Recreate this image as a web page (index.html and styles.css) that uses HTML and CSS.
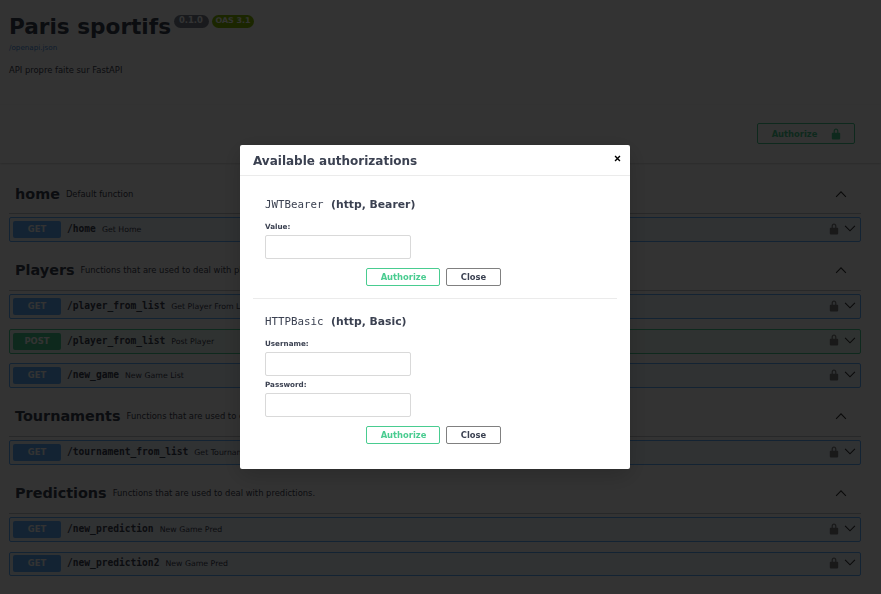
FILE: index.html
```html
<!DOCTYPE html>
<html lang="en">
<head>
<meta charset="utf-8">
<title>Paris sportifs</title>
<link rel="stylesheet" href="styles.css">
</head>
<body>
<header class="info">
  <div class="title-row">
    <h1 class="title">Paris sportifs</h1>
    <span class="badge badge-version">0.1.0</span>
    <span class="badge badge-oas">OAS 3.1</span>
  </div>
  <a class="spec-link" href="#">/openapi.json</a>
  <p class="description">API propre faite sur FastAPI</p>
</header>
<div class="scheme">
  <button class="auth-open">Authorize
    <svg class="lock-green" viewBox="0 0 20 20" width="12" height="12"><path d="M15.8 8H14V5.6C14 2.7 12.3 1 10 1S6 2.7 6 5.6V8H4.2C3.5 8 3 8.6 3 9.2v8.5c0 .7.5 1.3 1.2 1.3h11.6c.7 0 1.2-.6 1.2-1.3V9.2c0-.6-.5-1.2-1.2-1.2zM8 8V5.6C8 4 8.8 3 10 3s2 1 2 2.6V8H8z"/></svg>
  </button>
</div>
<main class="ops">
  <section class="tag-group">
    <div class="tag-head"><h3 class="tag-name">home</h3><span class="tag-desc">Default function</span>
      <svg class="chev-up" viewBox="0 0 20 20" width="14" height="14"><path d="M3 14 10 7l7 7"/></svg></div>
    <div class="op op-get"><span class="method">GET</span><span class="path">/home</span><span class="summary">Get Home</span>
      <svg class="lock-grey" viewBox="0 0 20 20" width="12" height="12"><path d="M15.8 8H14V5.6C14 2.7 12.3 1 10 1S6 2.7 6 5.6V8H4.2C3.5 8 3 8.6 3 9.2v8.5c0 .7.5 1.3 1.2 1.3h11.6c.7 0 1.2-.6 1.2-1.3V9.2c0-.6-.5-1.2-1.2-1.2zM8 8V5.6C8 4 8.8 3 10 3s2 1 2 2.6V8H8z"/></svg>
      <svg class="chev-down" viewBox="0 0 20 20" width="14" height="14"><path d="M3 7l7 7 7-7"/></svg></div>
  </section>
  <section class="tag-group">
    <div class="tag-head"><h3 class="tag-name">Players</h3><span class="tag-desc">Functions that are used to deal with players.</span>
      <svg class="chev-up" viewBox="0 0 20 20" width="14" height="14"><path d="M3 14 10 7l7 7"/></svg></div>
    <div class="op op-get"><span class="method">GET</span><span class="path">/player_from_list</span><span class="summary">Get Player From List</span>
      <svg class="lock-grey" viewBox="0 0 20 20" width="12" height="12"><path d="M15.8 8H14V5.6C14 2.7 12.3 1 10 1S6 2.7 6 5.6V8H4.2C3.5 8 3 8.6 3 9.2v8.5c0 .7.5 1.3 1.2 1.3h11.6c.7 0 1.2-.6 1.2-1.3V9.2c0-.6-.5-1.2-1.2-1.2zM8 8V5.6C8 4 8.8 3 10 3s2 1 2 2.6V8H8z"/></svg>
      <svg class="chev-down" viewBox="0 0 20 20" width="14" height="14"><path d="M3 7l7 7 7-7"/></svg></div>
    <div class="op op-post"><span class="method">POST</span><span class="path">/player_from_list</span><span class="summary">Post Player</span>
      <svg class="lock-grey" viewBox="0 0 20 20" width="12" height="12"><path d="M15.8 8H14V5.6C14 2.7 12.3 1 10 1S6 2.7 6 5.6V8H4.2C3.5 8 3 8.6 3 9.2v8.5c0 .7.5 1.3 1.2 1.3h11.6c.7 0 1.2-.6 1.2-1.3V9.2c0-.6-.5-1.2-1.2-1.2zM8 8V5.6C8 4 8.8 3 10 3s2 1 2 2.6V8H8z"/></svg>
      <svg class="chev-down" viewBox="0 0 20 20" width="14" height="14"><path d="M3 7l7 7 7-7"/></svg></div>
    <div class="op op-get"><span class="method">GET</span><span class="path">/new_game</span><span class="summary">New Game List</span>
      <svg class="lock-grey" viewBox="0 0 20 20" width="12" height="12"><path d="M15.8 8H14V5.6C14 2.7 12.3 1 10 1S6 2.7 6 5.6V8H4.2C3.5 8 3 8.6 3 9.2v8.5c0 .7.5 1.3 1.2 1.3h11.6c.7 0 1.2-.6 1.2-1.3V9.2c0-.6-.5-1.2-1.2-1.2zM8 8V5.6C8 4 8.8 3 10 3s2 1 2 2.6V8H8z"/></svg>
      <svg class="chev-down" viewBox="0 0 20 20" width="14" height="14"><path d="M3 7l7 7 7-7"/></svg></div>
  </section>
  <section class="tag-group">
    <div class="tag-head"><h3 class="tag-name">Tournaments</h3><span class="tag-desc">Functions that are used to deal with tournaments.</span>
      <svg class="chev-up" viewBox="0 0 20 20" width="14" height="14"><path d="M3 14 10 7l7 7"/></svg></div>
    <div class="op op-get"><span class="method">GET</span><span class="path">/tournament_from_list</span><span class="summary">Get Tournament From List</span>
      <svg class="lock-grey" viewBox="0 0 20 20" width="12" height="12"><path d="M15.8 8H14V5.6C14 2.7 12.3 1 10 1S6 2.7 6 5.6V8H4.2C3.5 8 3 8.6 3 9.2v8.5c0 .7.5 1.3 1.2 1.3h11.6c.7 0 1.2-.6 1.2-1.3V9.2c0-.6-.5-1.2-1.2-1.2zM8 8V5.6C8 4 8.8 3 10 3s2 1 2 2.6V8H8z"/></svg>
      <svg class="chev-down" viewBox="0 0 20 20" width="14" height="14"><path d="M3 7l7 7 7-7"/></svg></div>
  </section>
  <section class="tag-group">
    <div class="tag-head"><h3 class="tag-name">Predictions</h3><span class="tag-desc">Functions that are used to deal with predictions.</span>
      <svg class="chev-up" viewBox="0 0 20 20" width="14" height="14"><path d="M3 14 10 7l7 7"/></svg></div>
    <div class="op op-get"><span class="method">GET</span><span class="path">/new_prediction</span><span class="summary">New Game Pred</span>
      <svg class="lock-grey" viewBox="0 0 20 20" width="12" height="12"><path d="M15.8 8H14V5.6C14 2.7 12.3 1 10 1S6 2.7 6 5.6V8H4.2C3.5 8 3 8.6 3 9.2v8.5c0 .7.5 1.3 1.2 1.3h11.6c.7 0 1.2-.6 1.2-1.3V9.2c0-.6-.5-1.2-1.2-1.2zM8 8V5.6C8 4 8.8 3 10 3s2 1 2 2.6V8H8z"/></svg>
      <svg class="chev-down" viewBox="0 0 20 20" width="14" height="14"><path d="M3 7l7 7 7-7"/></svg></div>
    <div class="op op-get"><span class="method">GET</span><span class="path">/new_prediction2</span><span class="summary">New Game Pred</span>
      <svg class="lock-grey" viewBox="0 0 20 20" width="12" height="12"><path d="M15.8 8H14V5.6C14 2.7 12.3 1 10 1S6 2.7 6 5.6V8H4.2C3.5 8 3 8.6 3 9.2v8.5c0 .7.5 1.3 1.2 1.3h11.6c.7 0 1.2-.6 1.2-1.3V9.2c0-.6-.5-1.2-1.2-1.2zM8 8V5.6C8 4 8.8 3 10 3s2 1 2 2.6V8H8z"/></svg>
      <svg class="chev-down" viewBox="0 0 20 20" width="14" height="14"><path d="M3 7l7 7 7-7"/></svg></div>
  </section>
</main>
<div class="backdrop">
  <div class="modal">
    <div class="modal-head">
      <h3 class="modal-title">Available authorizations</h3>
      <button class="modal-x" aria-label="Close">
        <svg viewBox="0 0 20 20" width="7" height="7"><path d="M3 3l14 14M17 3 3 17"/></svg>
      </button>
    </div>
    <div class="modal-body">
      <form class="auth-form auth-first">
        <h4 class="scheme-title"><code class="scheme-code">JWTBearer</code>&nbsp; (http, Bearer)</h4>
        <label class="field-label">Value:</label>
        <input class="field" type="text">
        <div class="actions"><button class="btn btn-auth" type="button">Authorize</button><button class="btn btn-close" type="button">Close</button></div>
      </form>
      <form class="auth-form">
        <h4 class="scheme-title"><code class="scheme-code">HTTPBasic</code>&nbsp; (http, Basic)</h4>
        <label class="field-label">Username:</label>
        <input class="field" type="text">
        <label class="field-label field-label-next">Password:</label>
        <input class="field" type="password">
        <div class="actions"><button class="btn btn-auth" type="button">Authorize</button><button class="btn btn-close" type="button">Close</button></div>
      </form>
    </div>
  </div>
</div>
</body>
</html>
```

FILE: styles.css
```css
* { box-sizing: border-box; }
html, body { margin: 0; padding: 0; }
body {
  width: 881px;
  height: 594px;
  overflow: hidden;
  background: #fff;
  font-family: "DejaVu Sans", sans-serif;
  color: #3b4151;
}
.info { height: 105px; padding: 13px 9px 0; }
.title-row { display: flex; align-items: flex-start; }
.title { margin: 0; font-size: 21.6px; line-height: 27px; font-weight: 700; color: #3b4151; }
.badge {
  margin: 2px 0 0 3px; height: 13px; border-radius: 7px;
  font-size: 8.4px; line-height: 11px; font-weight: 700; color: #fff;
}
.badge-version { background: #7d8492; padding: 0 5px; width: 35px; }
.badge-oas { background: #89bf04; width: 42px; padding: 0 2px; font-size: 7.9px; text-align: center; }
.spec-link { display: block; margin-top: 3px; font-size: 7.2px; line-height: 10px; color: #4990e2; text-decoration: none; }
.description { margin: 11px 0 0; font-size: 8.4px; line-height: 12px; }
.scheme {
  height: 58px; padding: 18px 26px 0 0; display: flex; justify-content: flex-end; align-items: flex-start;
  background: #fff; box-shadow: 0 1px 2px rgba(0,0,0,.15), 0 0 1px rgba(0,0,0,.1);
}
.auth-open {
  width: 98px; height: 21px; display: flex; align-items: center; justify-content: center; gap: 13px; padding: 0 0 0 2px;
  background: transparent; border: 1px solid #49cc90; border-radius: 2px;
  color: #49cc90; font: 700 8.4px "DejaVu Sans", sans-serif;
}
.lock-green { fill: #49cc90; }
.ops { padding: 0 20px 0 9px; }
.tag-group { padding-top: 8.8px; }
.tag-group:first-child { padding-top: 11px; }
.tag-head {
  display: flex; align-items: center; height: 40px; margin: 0 0 3.4px; padding: 0 0 0 6px;
  border-bottom: 1px solid rgba(59,65,81,.3); width: 852px;
}
.tag-name { margin: 0; font-size: 14.4px; font-weight: 700; color: #3b4151; }
.tag-desc { margin-left: 6px; font-size: 8.4px; color: #3b4151; }
.chev-up { margin-left: auto; margin-right: 13px; fill: none; stroke: #333; stroke-width: 1.6; }
.op {
  display: flex; align-items: center; width: 852px; height: 24.8px; margin-bottom: 9.6px; padding: 0 0 0 3px;
  border: 1px solid #61affe; border-radius: 2px; background: rgba(97,175,254,.1);
}
.op:last-child { margin-bottom: 0; }
.op-post { border-color: #49cc90; background: rgba(73,204,144,.1); }
.method {
  width: 48px; height: 17px; flex: none; border-radius: 2px; background: #61affe; color: #fff;
  font-size: 8.4px; line-height: 17px; font-weight: 700; text-align: center;
}
.op-post .method { background: #49cc90; }
.path {
  margin: 0 0 2px 6px; font-family: "DejaVu Sans Mono", monospace; font-size: 9.6px; font-weight: 600; color: #3b4151;
}
.summary { margin-left: 6px; font-size: 7.8px; color: #3b4151; }
.lock-grey { margin: 0 0 2px auto; fill: #7c7c7c; }
.chev-down { margin: 0 3px 3px 3px; fill: none; stroke: #333; stroke-width: 1.6; }
.backdrop {
  position: fixed; inset: 0; padding: 145px 0 0 240px; background: rgba(0,0,0,.8);
}
.modal {
  width: 390px; height: 324px; background: #fff; border-radius: 2px;
  box-shadow: 0 6px 24px rgba(0,0,0,.2);
}
.modal-head {
  display: flex; align-items: center; justify-content: space-between; height: 31px; padding: 1px 9px 0 13px;
  border-bottom: 1px solid #ebebeb;
}
.modal-title { margin: 0; font-size: 12px; font-weight: 700; color: #3b4151; }
.modal-x { padding: 0; border: 0; background: none; display: flex; margin-top: -4px; }
.modal-x svg { fill: none; stroke: #000; stroke-width: 4; }
.modal-body { padding: 18px 13px 0; }
.auth-form { padding: 0 12px; }
.auth-first { margin-bottom: 12px; padding-bottom: 12px; border-bottom: 1px solid #ebebeb; }
.scheme-title { margin: 0; height: 25px; font-size: 10.8px; line-height: 22px; font-weight: 700; color: #3b4151; }
.scheme-code { font-family: "DejaVu Sans Mono", monospace; font-size: 10.8px; font-weight: 400; }
.field-label { display: block; height: 14px; font-size: 7.2px; font-weight: 700; line-height: 16px; color: #3b4151; }
.field-label-next { margin-top: 1.4px; }
.field {
  display: block; width: 146px; height: 23.4px; margin: 2.3px 0 0; padding: 0;
  background: #fff; border: 1px solid #d9d9d9; border-radius: 2px;
}
.actions { display: flex; justify-content: center; gap: 6px; margin-top: 9.4px; padding-right: 4px; }
.btn { height: 18px; padding: 0; background: transparent; border-radius: 2px; font: 700 8.4px "DejaVu Sans", sans-serif; }
.btn-auth { width: 74px; padding-left: 2px; border: 1px solid #49cc90; color: #49cc90; }
.btn-close { width: 55px; padding-left: 1px; border: 1px solid #808080; color: #3b4151; }
```
